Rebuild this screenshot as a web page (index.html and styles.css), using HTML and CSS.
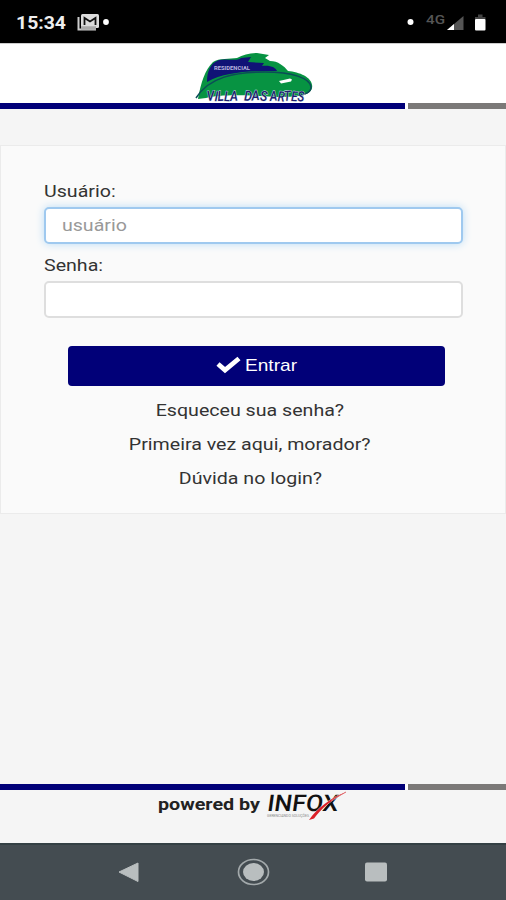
FILE: index.html
```html
<!DOCTYPE html>
<html lang="pt-BR">
<head>
<meta charset="utf-8">
<title>Villa das Artes</title>
<link rel="stylesheet" href="styles.css">
</head>
<body>
<div class="screen">
  <div class="status">
    <div class="status-left">
      <svg width="96" height="24" viewBox="0 0 96 24">
        <text x="0" y="18.500" class="clock" textLength="50" lengthAdjust="spacingAndGlyphs">15:34</text>
        <path d="M62.500 7v12.500H80" fill="none" stroke="#ccc" stroke-width="2"/>
        <rect x="65" y="4" width="18" height="14" rx="1.500" fill="#ddd"/>
        <path d="M68.500 15V8l5.500 3.500L79.500 8v7" fill="none" stroke="#111" stroke-width="1.800"/>
        <path d="M65 18h15" stroke="#aaa" stroke-width="3.500"/>
        <circle cx="90" cy="12" r="2.900" fill="#fff"/>
      </svg>
    </div>
    <svg width="82" height="24" viewBox="0 0 82 24">
      <circle cx="4.500" cy="12" r="3" fill="#fff"/>
      <text x="20" y="13.500" class="net" textLength="19" lengthAdjust="spacingAndGlyphs">4G</text>
      <path d="M41 20 57.500 6v14z" fill="#555"/>
      <path d="M41 20l7-6v6z" fill="#fff"/>
      <path d="M69 9.500V7h3V4.500h4.500V7h3v2.500z" fill="#444"/>
      <rect x="69" y="9" width="10.500" height="11.500" rx="1" fill="#fff"/>
    </svg>
  </div>
  <header class="header">
    <svg class="logo" width="124" height="52" viewBox="0 0 124 52">
      <path d="M6 46C9 29 13 17 21 9C27 5 38 6 45 5C51 2 57 0 65 0L77 2L73 5L78 8C86 8 92 13 96 18C108 19 122 25 120 35C118 43 105 44 84 44C55 42 29 41 14 45Z" fill="#079342"/>
      <path d="M15 29C15 19 18 10 27 7C36 5 44 9 49 5L59 4L56 9L72 10L70 13C79 12 84 15 85 18C62 18 34 18 15 29Z" fill="#101376"/>
      <path d="M4 45C17 24 43 19 73 19C100 19 118 25 119 34C119 39 113 42 107 42" fill="none" stroke="#0c4c58" stroke-width="1.500"/>
      <path d="M87 28l11-2.500 2 1-1 2-10 2z" fill="#fff"/>
      <text x="22" y="17" class="logo-small" textLength="36" lengthAdjust="spacingAndGlyphs">RESIDENCIAL</text>
      <text x="15" y="48" class="logo-name" rotate="-4 4 -3 3 -3 0 3 -5 4 0 -4 4 -3 3 4" textLength="31" lengthAdjust="spacingAndGlyphs">VILLA</text>
      <text x="52" y="47.500" class="logo-name" rotate="3 -4 5" textLength="23" lengthAdjust="spacingAndGlyphs">DAS</text>
      <text x="78" y="48" class="logo-name" rotate="-4 4 -3 3 4" textLength="34" lengthAdjust="spacingAndGlyphs">ARTES</text>
    </svg>
  </header>
  <div class="rule"><i class="navy"></i><i class="gray"></i></div>
  <main class="content">
    <form class="card">
      <label for="user"><span class="wide">Usuário:</span></label>
      <div class="field focused"><input id="user" type="text" placeholder="usuário"></div>
      <label for="pass"><span class="wide">Senha:</span></label>
      <div class="field"><input id="pass" type="password"></div>
      <button type="button">
        <svg width="25" height="20" viewBox="0 0 25 20"><path d="M2 8 9 14 23 2.500" fill="none" stroke="#fff" stroke-width="4.800"/></svg>
        <svg width="52" height="22" viewBox="0 0 52 22"><text x="0" y="16" class="enter" textLength="52" lengthAdjust="spacingAndGlyphs">Entrar</text></svg>
      </button>
      <nav class="links">
        <a><span class="wide">Esqueceu sua senha?</span></a>
        <a><span class="wide">Primeira vez aqui, morador?</span></a>
        <a><span class="wide">Dúvida no login?</span></a>
      </nav>
    </form>
  </main>
  <div class="rule"><i class="navy"></i><i class="gray"></i></div>
  <footer class="footer">
    <svg width="190" height="32" viewBox="0 0 190 32">
      <text x="0" y="20" class="powered" textLength="102" lengthAdjust="spacingAndGlyphs">powered by</text>
      <text transform="translate(108.500 20.500) skewX(-8)" class="infox" textLength="71" lengthAdjust="spacingAndGlyphs">INFOX</text>
      <text x="109" y="26.500" class="tagline" textLength="42" lengthAdjust="spacingAndGlyphs">GERENCIANDO SOLUÇÕES</text>
      <path d="M188 2C174 7 159 18 151 30L156 28.500C163 19 173 10 188 2Z" fill="#db2028" stroke="#f5f5f5" stroke-width=".8" paint-order="stroke"/>
      <path d="M173 10.500 188 2" stroke="#e0696c" stroke-width="1"/>
    </svg>
  </footer>
  <div class="navbar">
    <svg width="22" height="22" viewBox="0 0 22 22"><path d="M1 11 20 2v18.500z" fill="#b9bebf" stroke="#b9bebf" stroke-linejoin="round"/></svg>
    <svg width="34" height="28" viewBox="0 0 34 28"><ellipse cx="18.500" cy="14" rx="15" ry="12.500" fill="none" stroke="#a3a9ab" stroke-width="1.700"/><ellipse cx="18.500" cy="14" rx="10.500" ry="9" fill="#b9bebf"/></svg>
    <svg width="24" height="22" viewBox="0 0 24 22"><rect x="1" y="1.500" width="22" height="19" rx="2" fill="#b9bebf"/></svg>
  </div>
</div>
</body>
</html>
```
FILE: styles.css
```css
* { box-sizing: border-box; }
body { margin: 0; font-family: Roboto, "Liberation Sans", sans-serif; color: #333; background: #f5f5f5; }
svg { display: block; flex: none; overflow: visible; }
.screen { display: flex; flex-direction: column; width: 506px; height: 900px; overflow: hidden; }
.status { height: 43px; background: #000; display: flex; justify-content: space-between; padding: 10px 18px 0 16px; flex: none; }
.clock { font-size: 18px; font-weight: 700; fill: #eee; }
.net { font-size: 12px; font-weight: 500; fill: #555; }
.header { height: 60px; background: #fff; border-top: 1px solid #ccc; display: flex; justify-content: center; padding: 9px 0 0 2px; flex: none; }
.logo-small { font-size: 5px; font-weight: 700; fill: #b9b5df; }
.logo-name { font: italic 500 14px Roboto, sans-serif; fill: #201d70; stroke: #d4e4e8; stroke-width: .8px; paint-order: stroke; }
.rule { display: flex; gap: 3px; height: 6px; background: #fff; flex: none; }
.navy { width: 405px; background: #010078; }
.gray { flex: 1; background: #7b7978; }
.content { flex: 1; padding-top: 36px; }
.card { height: 369px; background: #fafafa; border: 1px solid #ebebeb; padding: 34px 42px 0 43px; }
.card label { display: block; height: 27px; line-height: 24px; font-size: 16px; }
.wide { display: inline-block; transform: scaleX(1.225); transform-origin: left; white-space: nowrap; }
.field { height: 37px; margin-bottom: 10px; border: 2px solid #dedede; border-radius: 5px; background: #fff; overflow: hidden; }
.focused { border-color: #9fc9ef; box-shadow: 0 0 8px #b9dcf6; }
.field input { display: block; width: 80%; height: 32px; border: 0; outline: 0; background: none; padding: 0 0 0 13px; font: 16px Roboto, sans-serif; transform: scaleX(1.225); transform-origin: left; }
.field input::placeholder { color: #999; opacity: 1; }
.card button { display: flex; align-items: center; justify-content: center; gap: 4px; width: 377px; height: 40px; margin: 28px 0 0 24px; padding: 0; border: 0; border-radius: 4px; background: #010078; }
.enter { font-size: 17px; font-weight: 500; fill: #fff; }
.links { display: flex; flex-direction: column; align-items: center; margin: 8px 7px 0 0; font-size: 16px; }
.links a { height: 34px; line-height: 34px; }
.links .wide { transform-origin: center; }
.footer { height: 53px; display: flex; justify-content: center; flex: none; }
.powered { font-size: 16px; font-weight: 700; fill: #222; }
.infox { font: 500 23px Roboto, sans-serif; fill: #111; }
.tagline { font-size: 3.500px; fill: #888; }
.navbar { height: 57px; background: #444c51; border-top: 2px solid #344044; display: flex; align-items: center; justify-content: space-between; padding: 0 118px 2px; flex: none; }
```
